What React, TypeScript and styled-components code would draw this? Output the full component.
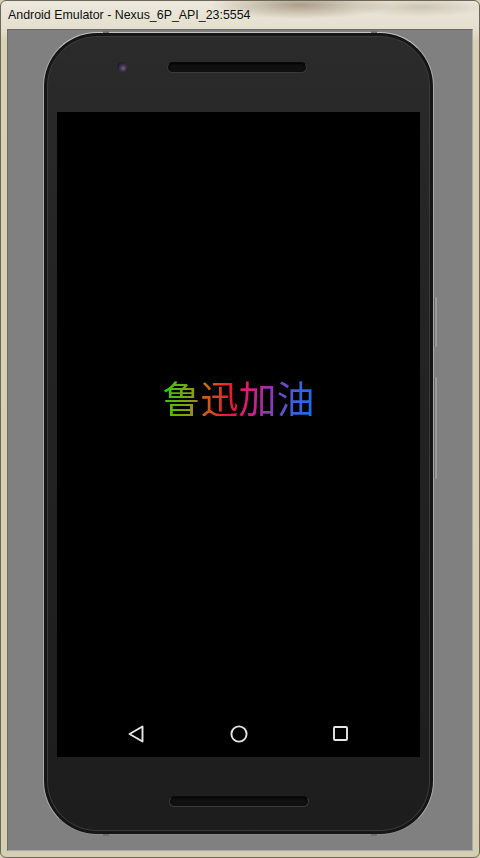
import React from "react";
import styled, { createGlobalStyle } from "styled-components";

const Global = createGlobalStyle`
  html, body { margin: 0; padding: 0; background: #d8d0b6; }
  #root { width: 480px; height: 858px; }
`;

const Window = styled.div`
  width: 480px;
  height: 858px;
  box-sizing: border-box;
  display: flex;
  flex-direction: column;
  padding: 0 6px 6px 6px;
  border: 1px solid #6d6656;
  border-radius: 6px;
  background:
    radial-gradient(ellipse 90px 14px at 300px 4px, rgba(120, 100, 70, 0.55), rgba(120, 100, 70, 0) 100%),
    radial-gradient(ellipse 70px 10px at 420px 6px, rgba(150, 135, 110, 0.35), rgba(150, 135, 110, 0) 100%),
    linear-gradient(180deg, #ece8dc 0px, #e4dfcf 28px, #d9d1b6 40px, #d6ceb2 100%);
  font-family: "Liberation Sans", "Noto Sans", Arial, sans-serif;
`;

const TitleBar = styled.div`
  height: 28px;
  display: flex;
  align-items: center;
  padding-left: 1px;
  font-size: 12.4px;
  color: #111;
`;

const Client = styled.div`
  flex: 1;
  background: #808080;
  border: 1px solid #696969;
  border-right-color: #a8a8a8;
  border-bottom-color: #a8a8a8;
  padding: 2px 0 0 35px;
  overflow: hidden;
`;

const Phone = styled.div`
  position: relative;
  width: 391px;
  height: 803px;
  box-sizing: border-box;
  border-radius: 54px;
  border: 1px solid #a9a9a9;
  border-top-color: #c4c4c4;
  border-bottom-color: #8a8a8a;
  background: linear-gradient(180deg, #2b2b2b 0%, #242424 30%, #1d1d1d 100%);
  box-shadow: inset 0 0 0 3px #151515, inset 0 0 0 4px #3a3a3a;
  display: flex;
  flex-direction: column;
  padding: 0 13px;
`;

const TopBezel = styled.div`
  height: 79px;
  display: flex;
  align-items: center;
  align-self: stretch;
  padding: 0 0 10px 60px;
  gap: 40px;
  box-sizing: border-box;
`;

const BottomBezel = styled.div`
  height: 77px;
  display: flex;
  justify-content: center;
  align-items: flex-start;
  padding-top: 39px;
  box-sizing: border-box;
`;

const Camera = styled.div`
  width: 10px;
  height: 10px;
  border-radius: 50%;
  background: radial-gradient(circle at 62% 62%, #8a5a80 0, #3a3550 35%, #1c1c26 70%, #222 100%);
  box-shadow: 0 0 0 1px #2e2e2e;
`;

const Speaker = styled.div`
  width: 140px;
  height: 11px;
  box-sizing: border-box;
  border-radius: 6px;
  background: #101010;
  border: 1px solid #3a3a3a;
  border-top-color: #0a0a0a;
  box-shadow: inset 0 1px 2px #000;
`;

const Screen = styled.div`
  height: 646px;
  background: #000;
  display: flex;
  flex-direction: column;
`;

const Content = styled.div`
  flex: 1;
  display: flex;
  align-items: center;
  justify-content: center;
  padding-bottom: 28px;
`;

const Slogan = styled.div`
  font-family: "Noto Sans CJK SC", "Noto Sans", sans-serif;
  font-size: 38px;
  line-height: 1;
  background: linear-gradient(100deg, #2ad000 0%, #88a010 20%, #d85020 33%, #ee1830 45%, #d02080 57%, #9038b0 70%, #4060d8 85%, #1a6cf0 100%);
  -webkit-background-clip: text;
  background-clip: text;
  -webkit-text-fill-color: transparent;
  color: transparent;
`;

const NavBar = styled.div`
  height: 46px;
  display: flex;
  justify-content: center;
  align-items: center;
  gap: 78px;
`;

const NavIcon = styled.svg`
  width: 24px;
  height: 24px;
  display: block;
`;

const SideButton = styled.div<{ $top: number; $h: number }>`
  position: absolute;
  right: -4px;
  top: ${(p) => p.$top}px;
  height: ${(p) => p.$h}px;
  width: 2px;
  border-radius: 1px;
  background: #9a9a9a;
  border-left: 1px solid #6a6a6a;
`;

const Notch = styled.div<{ $left: number; $top?: boolean }>`
  position: absolute;
  left: ${(p) => p.$left}px;
  ${(p) => (p.$top ? "top: -2px;" : "bottom: -2px;")}
  width: 6px;
  height: 2px;
  background: #6f6f6f;
`;

export default function App() {
  return (
    <>
      <Global />
      <Window>
        <TitleBar>Android Emulator - Nexus_6P_API_23:5554</TitleBar>
        <Client>
          <Phone>
            <Notch $left={59} $top />
            <Notch $left={327} $top />
            <Notch $left={59} />
            <Notch $left={327} />
            <SideButton $top={264} $h={50} />
            <SideButton $top={344} $h={102} />
            <TopBezel>
              <Camera />
              <Speaker />
            </TopBezel>
            <Screen>
              <Content>
                <Slogan>鲁迅加油</Slogan>
              </Content>
              <NavBar>
                <NavIcon viewBox="0 0 24 24">
                  <path d="M4.5 12 L17.5 4.5 L17.5 19.5 Z" fill="none" stroke="#e6e6e6" strokeWidth="1.9" strokeLinejoin="round" />
                </NavIcon>
                <NavIcon viewBox="0 0 24 24">
                  <circle cx="12" cy="12" r="7.6" fill="none" stroke="#e6e6e6" strokeWidth="1.9" />
                </NavIcon>
                <NavIcon viewBox="0 0 24 24">
                  <rect x="5" y="5" width="13" height="13" rx="1" fill="none" stroke="#e6e6e6" strokeWidth="1.9" />
                </NavIcon>
              </NavBar>
            </Screen>
            <BottomBezel>
              <Speaker />
            </BottomBezel>
          </Phone>
        </Client>
      </Window>
    </>
  );
}
